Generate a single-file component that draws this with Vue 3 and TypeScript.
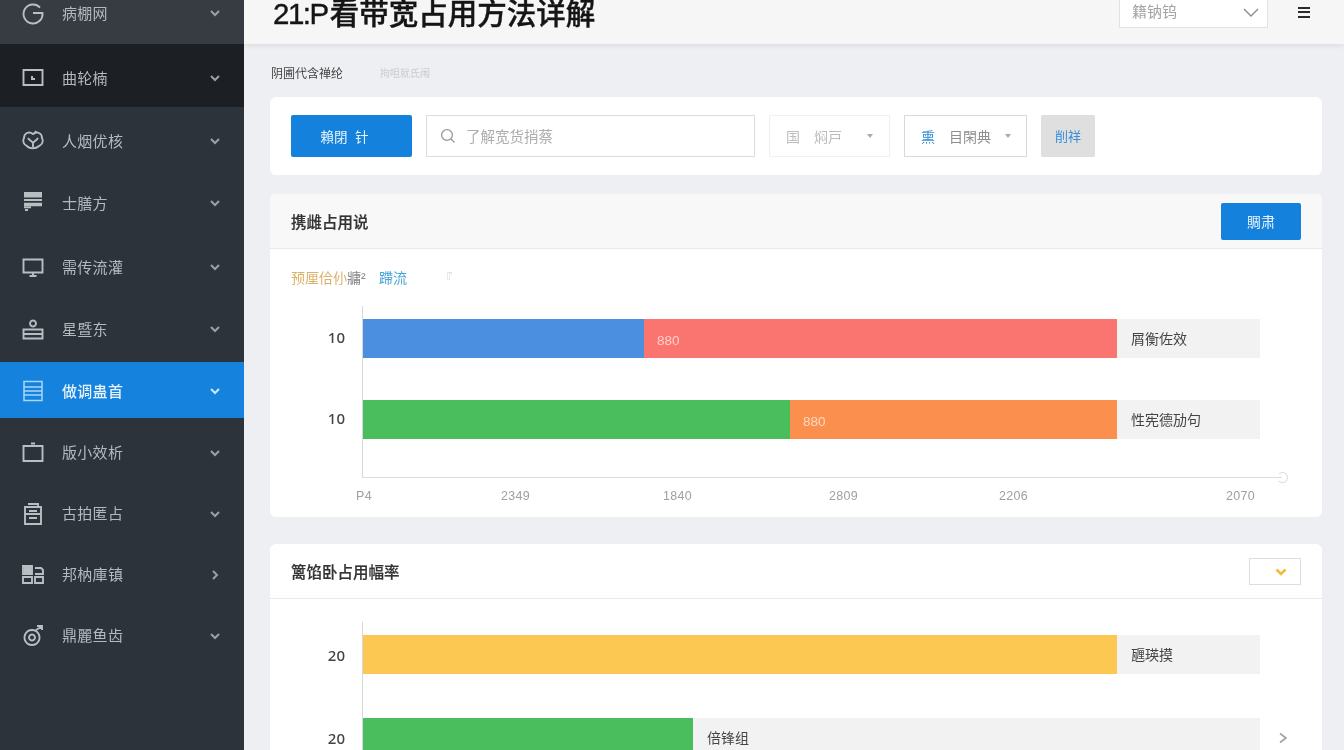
<script setup lang="ts">
interface NavItem {
  label: string
  icon: string
  active?: boolean
  dark?: boolean
  open?: boolean
}

interface Segment {
  width: number
  color: string
  text?: string
}

interface Row {
  y: string
  segments: Segment[]
  tail: string
}

const navItems: NavItem[] = [
  { label: '病棚网', icon: 'M19 6.5A9.5 9.5 0 1 0 21.5 12H12' },
  { label: '曲轮楠', icon: 'M2.5 4h19v15h-19zM11 10v3h3', dark: true },
  { label: '人烟优核', icon: 'M12 5C8 2 3 4 3 9c-2 3 0 7 3 8 2 3 9 3 12 0 3-1 5-5 3-8 0-5-5-7-9-4zM7 9c2 3 4 3 5 5 1-2 3-2 5-5M12 14v4M15 2l-2 3' },
  { label: '士膳方', icon: 'M3 2h18M3 3.8h18M3 5.6h18M3 9h18M3 12.6h18M3 14.4h18M3 16.4h7M4 19h3' },
  { label: '需传流灌', icon: 'M2.5 4.5h19v13h-19zM12 17.5v3M8.5 21h7' },
  { label: '星暨东', icon: 'M12 3.5a3 3 0 1 0 .01 0M2.5 12.5h19v9h-19zM3 17h18' },
  { label: '做调蛊首', icon: 'M3 2.5h18v19H3zM3 8h18M3 12h18M3 16h18', active: true },
  { label: '版小效析', icon: 'M2.5 5h19v15h-19zM10 2.5h4' },
  { label: '古拍匿占', icon: 'M4 5h16v17H4zM7 2h10v3M4 12h16M8 9h8M8 16h8' },
  { label: '邦枘庫镇', icon: 'M2 3h9v8H2zM3 5h7M3 7h7M3 9h7M2 14h9v6H2zM14 5h6l2 2v4h-8M14 14h8v6h-8z', open: true },
  { label: '鼎麗鱼齿', icon: 'M11 6a7.5 7.5 0 1 0 .01 0zM11 10.5a3 3 0 1 0 .01 0zM15 6l5-3M16 2h5v4' },
]

const usageRows: Row[] = [
  {
    y: '10',
    segments: [
      { width: 281, color: '#4a8fe0' },
      { width: 473, color: '#fb7570', text: '880' },
    ],
    tail: '屑衡佐效',
  },
  {
    y: '10',
    segments: [
      { width: 427, color: '#4abd5d' },
      { width: 327, color: '#fb8f4d', text: '880' },
    ],
    tail: '性宪德劢句',
  },
]

const rateRows: Row[] = [
  { y: '20', segments: [{ width: 754, color: '#fdc851' }], tail: '甅瑛摸' },
  { y: '20', segments: [{ width: 330, color: '#4abd5d' }], tail: '倍锋组' },
]

const ticks = ['P4', '2349', '1840', '2809', '2206', '2070']
</script>

<template>
  <div class="page">
    <aside class="sidebar">
      <nav class="nav">
        <a
          v-for="item in navItems"
          :key="item.label"
          class="nav-item"
          :class="{ active: item.active, dark: item.dark }"
        >
          <svg class="nav-icon" viewBox="0 0 24 24"><path :d="item.icon" /></svg>
          <span class="nav-label">{{ item.label }}</span>
          <svg class="nav-arrow" viewBox="0 0 12 12">
            <path :d="item.open ? 'M4 2l4 4-4 4' : 'M2 4l4 4 4-4'" />
          </svg>
        </a>
      </nav>
    </aside>

    <main class="main">
      <header class="topbar">
        <h1 class="title"><span class="title-num">21:P</span>看带宽占用方法详解</h1>
        <div class="top-select">
          <span>籍钠钨</span>
          <svg viewBox="0 0 16 10"><path d="M1 1l7 7 7-7" /></svg>
        </div>
        <div class="burger"><i></i><i></i><i></i></div>
      </header>

      <div class="crumbs">
        <span class="crumb-main">阴圃代含禅纶</span>
        <span class="crumb-sub">拘咀就氏闱</span>
      </div>

      <section class="toolbar">
        <button class="btn btn-primary btn-new">賴閉&nbsp;&nbsp;针</button>
        <div class="search">
          <svg viewBox="0 0 16 16"><circle cx="7" cy="7" r="5.4" /><path d="M11 11l3.5 3.5" /></svg>
          <span>了解宽货捎蔡</span>
        </div>
        <div class="select select-faint">
          <span class="sel-mark">国</span>
          <span class="sel-text">焖戸</span>
          <i class="caret"></i>
        </div>
        <div class="select">
          <span class="sel-mark blue">熏</span>
          <span class="sel-text">目閑典</span>
          <i class="caret"></i>
        </div>
        <button class="btn btn-grey">削祥</button>
      </section>

      <section class="panel">
        <div class="panel-head head-grey">
          <h2>携雌占用说</h2>
          <button class="btn btn-primary btn-small">賙肃</button>
        </div>
        <div class="legend">
          <span class="lg-yellow">预厘佮仦</span><span class="lg-grey">牅²</span>
          <span class="lg-blue">蹛流</span>
          <span class="lg-faint">『</span>
        </div>
        <div class="chart">
          <div class="y-col">
            <span v-for="(row, i) in usageRows" :key="i">{{ row.y }}</span>
          </div>
          <div class="plot">
            <div v-for="(row, i) in usageRows" :key="i" class="row">
              <div class="track">
                <div
                  v-for="(seg, j) in row.segments"
                  :key="j"
                  class="seg"
                  :style="{ width: seg.width + 'px', background: seg.color }"
                >{{ seg.text }}</div>
                <div class="tail">{{ row.tail }}</div>
              </div>
            </div>
            <i class="axis-end"></i>
          </div>
        </div>
        <div class="ticks">
          <span v-for="t in ticks" :key="t">{{ t }}</span>
        </div>
      </section>

      <section class="panel panel-rate">
        <div class="panel-head">
          <h2>篱馅卧占用幅率</h2>
          <div class="mini-select">
            <svg viewBox="0 0 12 8"><path d="M1.5 1.5L6 6l4.5-4.5" /></svg>
          </div>
        </div>
        <div class="chart chart-rate">
          <div class="y-col">
            <span v-for="(row, i) in rateRows" :key="i">{{ row.y }}</span>
          </div>
          <div class="plot">
            <div v-for="(row, i) in rateRows" :key="i" class="row">
              <div class="track">
                <div
                  v-for="(seg, j) in row.segments"
                  :key="j"
                  class="seg"
                  :style="{ width: seg.width + 'px', background: seg.color }"
                ></div>
                <div class="tail">{{ row.tail }}</div>
              </div>
              <svg v-if="i === 1" class="row-next" viewBox="0 0 10 12"><path d="M2 1.5L8 6l-6 4.5" /></svg>
            </div>
          </div>
        </div>
      </section>
    </main>
  </div>
</template>

<style scoped>
.page {
  display: flex;
  height: 750px;
  overflow: hidden;
  background: #edeff3;
  font-family: "Liberation Sans", "Noto Sans CJK SC", sans-serif;
  filter: blur(0.35px);
}

.sidebar {
  width: 244px;
  flex-shrink: 0;
  height: 750px;
  background: #2c333b;
  overflow: hidden;
}
.nav {
  margin-top: -18px;
  display: grid;
  grid-template-rows: 62px 63px 65px 62px 64px 64px 56px 65px 61px 61px 61px;
}
.nav-item {
  display: flex;
  align-items: center;
  padding-left: 21px;
  padding-right: 23px;
  color: #b4b9be;
  font-size: 15px;
}
.nav-item:nth-child(1) { background: #373c43; }
.nav-item:nth-child(2) { background: #1c2025; padding-top: 5px; }
.nav-item:nth-child(3) { padding-top: 3px; }
.nav-item:nth-child(5) { padding-top: 2px; }
.nav-item:nth-child(6) { padding-bottom: 2px; }
.nav-item:nth-child(8) { padding-top: 4px; }
.nav-item.active {
  background: #1583de;
  color: #e6f2fb;
  padding-top: 2px;
  font-weight: 500;
}
.nav-icon {
  width: 24px;
  height: 24px;
  flex-shrink: 0;
  fill: none;
  stroke: #b9bec3;
  stroke-width: 1.9;
}
.nav-item.active .nav-icon { stroke: #a9d6f7; stroke-width: 1.5; }
.nav-label { margin-left: 17px; flex: 1; letter-spacing: 0.3px; padding-bottom: 2px; }
.nav-arrow {
  width: 12px;
  height: 12px;
  fill: none;
  stroke: #9aa0a6;
  stroke-width: 2;
}
.nav-item.active .nav-arrow { stroke: #cfe8fa; }

.main {
  flex: 1;
  min-width: 0;
  height: 750px;
  overflow: hidden;
}

.topbar {
  margin-top: -20px;
  height: 64px;
  display: flex;
  align-items: center;
  background: #f6f6f6;
  padding-left: 29px;
  box-shadow: 0 2px 5px rgba(0, 0, 0, 0.07);
}
.title {
  margin: 0;
  flex: 1;
  padding-bottom: 3px;
  font-size: 29.5px;
  font-weight: 500;
  -webkit-text-stroke: 0.4px #151515;
  color: #151515;
  white-space: nowrap;
}
.title-num { letter-spacing: -1.5px; margin-right: 2px; }
.top-select {
  width: 149px;
  height: 48px;
  align-self: flex-start;
  padding: 15px 8px 0 12px;
  box-sizing: border-box;
  display: flex;
  align-items: center;
  justify-content: space-between;
  background: #fff;
  border: 1px solid #e2e2e2;
  color: #a3a3a3;
  font-size: 15px;
}
.top-select span { padding-bottom: 2px; }
.top-select svg { width: 16px; height: 10px; margin-top: 2px; fill: none; stroke: #8c8c8c; stroke-width: 1.4; }
.burger {
  width: 12px;
  margin: 0 34px 0 30px;
  display: flex;
  flex-direction: column;
  gap: 2.5px;
}
.burger i { height: 2px; background: #2b2b2b; }

.crumbs {
  margin: 20px 0 0 27px;
  height: 16px;
  display: flex;
  align-items: center;
  font-size: 12px;
}
.crumb-main { color: #444; width: 109px; }
.crumb-sub { color: #c9cbce; font-size: 10px; }

.toolbar {
  margin: 17px 22px 0 26px;
  height: 78px;
  box-sizing: border-box;
  padding: 18px 21px;
  display: flex;
  gap: 14px;
  background: #fff;
  border-radius: 6px;
}
.btn {
  border: none;
  border-radius: 2px;
  font-family: inherit;
  cursor: pointer;
}
.btn-primary { background: #1482dc; color: #eaf4fc; }
.btn-new { width: 121px; font-size: 13.5px; padding: 0 14px 0 0; }
.btn-grey { width: 54px; background: #dfdfdf; color: #3a8fd8; font-size: 13px; padding: 0 0 2px; }
.search {
  width: 329px;
  box-sizing: border-box;
  display: flex;
  align-items: center;
  gap: 10px;
  padding-left: 13px;
  border: 1px solid #dcdcdc;
  color: #adadad;
  font-size: 14.5px;
}
.search span { padding-bottom: 2px; }
.search svg { width: 16px; height: 16px; fill: none; stroke: #999; stroke-width: 1.3; }
.select {
  width: 123px;
  box-sizing: border-box;
  display: flex;
  align-items: center;
  padding: 0 15px 0 16px;
  border: 1px solid #d9d9d9;
  color: #8f8f8f;
  font-size: 14px;
}
.select-faint { width: 121px; border-color: #f0f0f0; color: #bdbdbd; padding-right: 16px; }
.sel-text { margin-left: 14px; flex: 1; }
.sel-mark.blue { color: #3a8fd8; }
.caret {
  width: 0;
  height: 0;
  border-left: 3.5px solid transparent;
  border-right: 3.5px solid transparent;
  border-top: 4px solid #aaa;
}

.panel {
  margin: 19px 22px 0 26px;
  height: 323px;
  background: #fff;
  border-radius: 6px;
}
.panel-rate { margin-top: 27px; height: 240px; }
.panel-head {
  height: 55px;
  box-sizing: border-box;
  padding: 0 21px;
  display: flex;
  align-items: center;
  justify-content: space-between;
  border-bottom: 1px solid #e9e9e9;
}
.head-grey { background: #f8f8f8; border-radius: 6px 6px 0 0; }
.panel-head h2 {
  margin: 0;
  font-size: 15.5px;
  font-weight: 500;
  -webkit-text-stroke: 0.2px #333;
  color: #333;
}
.btn-small { width: 80px; height: 37px; font-size: 14px; }
.mini-select {
  width: 52px;
  height: 27px;
  margin-top: 1px;
  box-sizing: border-box;
  border: 1px solid #dedede;
  display: flex;
  align-items: center;
  justify-content: flex-end;
  padding-right: 13px;
}
.mini-select svg { width: 12px; height: 8px; fill: none; stroke: #f0bc3c; stroke-width: 2.6; }

.legend {
  height: 57px;
  box-sizing: border-box;
  padding: 0 0 2px 21px;
  display: flex;
  align-items: center;
  font-size: 14px;
}
.lg-yellow { color: #dcb26a; }
.lg-grey { color: #888; width: 32px; }
.lg-blue { color: #45a4d6; }
.lg-faint { color: #ccc; margin-left: 34px; font-size: 11px; }

.chart { display: flex; }
.y-col {
  width: 92px;
  box-sizing: border-box;
  padding: 12px 17px 0 0;
  display: flex;
  flex-direction: column;
  gap: 42px;
  align-items: flex-end;
  font-family: "Noto Sans", sans-serif;
  font-size: 15px;
  font-weight: 500;
  color: #444;
}
.y-col span { height: 39px; line-height: 39px; }
.plot {
  position: relative;
  width: 920px;
  height: 172px;
  box-sizing: border-box;
  padding-top: 13px;
  display: flex;
  flex-direction: column;
  gap: 42px;
  border-left: 1.5px solid #d8d8d8;
  border-bottom: 1.5px solid #dcdcdc;
}
.row { display: flex; align-items: center; gap: 18px; }
.track {
  width: 897px;
  height: 39px;
  flex-shrink: 0;
  display: flex;
  background: #f2f2f2;
}
.seg {
  flex-shrink: 0;
  line-height: 43px;
  padding-left: 13px;
  box-sizing: border-box;
  color: rgba(255, 255, 255, 0.65);
  font-size: 13.5px;
}
.tail {
  flex: 1;
  padding-left: 14px;
  line-height: 40px;
  font-size: 14px;
  color: #444;
}
.axis-end {
  position: absolute;
  right: -6px;
  bottom: -6px;
  width: 9px;
  height: 9px;
  border-radius: 50%;
  border: 1.5px solid #dcdcdc;
  border-left-color: transparent;
}
.ticks {
  margin: 11px 0 0 86px;
  display: grid;
  grid-template-columns: 145px 162px 166px 170px 227px 1fr;
  color: #a0a0a0;
  font-size: 12.5px;
  letter-spacing: 0.3px;
}

.chart-rate { margin-top: 23px; }
.chart-rate .y-col { padding-top: 14px; gap: 44px; }
.chart-rate .plot { height: 200px; gap: 44px; border-bottom: none; }
.row-next { width: 10px; height: 12px; flex-shrink: 0; overflow: visible; fill: none; stroke: #a0a0a0; stroke-width: 1.6; }
</style>

<style>
html, body { margin: 0; overflow: hidden; background: #edeff3; }
</style>
